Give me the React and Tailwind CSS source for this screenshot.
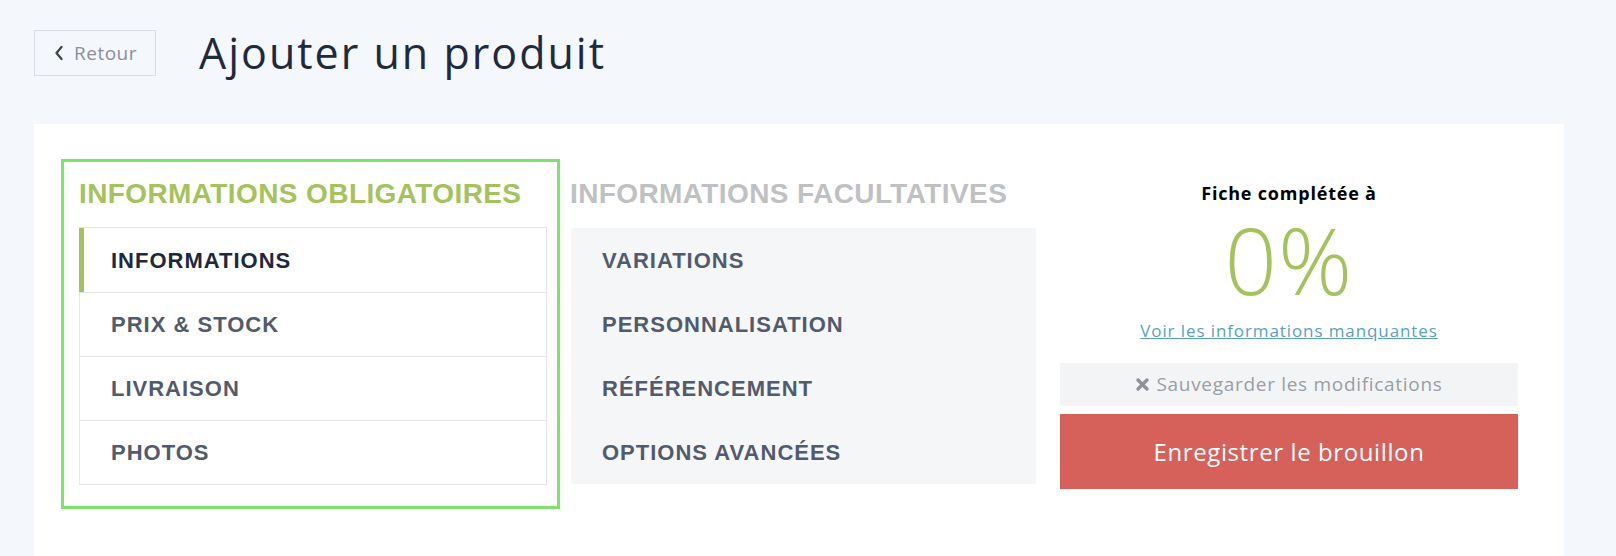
import React from "react";

const sans = "font-['Open_Sans','Noto_Sans',sans-serif]";
const caps = "font-['Liberation_Sans',Arial,sans-serif]";

const required = ["INFORMATIONS", "PRIX & STOCK", "LIVRAISON", "PHOTOS"];
const optional = ["VARIATIONS", "PERSONNALISATION", "RÉFÉRENCEMENT", "OPTIONS AVANCÉES"];

export default function App() {
  return (
    <div className={`min-h-[556px] bg-[#f4f7fb] ${sans}`}>
      {/* header */}
      <div className="flex items-center gap-[43px] pl-[34px] pt-[30px] pb-[48px]">
        <button className="flex items-center gap-[9px] h-[46px] w-[122px] justify-center border border-[#d8dde3] text-[19px] text-[#8a9099] tracking-[0.5px]">
          <svg width="12" height="18" viewBox="0 0 12 18" fill="none">
            <path d="M8.5 3L3.5 9L8.5 15" stroke="#3f4753" strokeWidth="2.3" strokeLinecap="round" strokeLinejoin="round" />
          </svg>
          Retour
        </button>
        <h1 className="text-[43px] leading-[46px] text-[#1f2a3d] tracking-[2px]">Ajouter un produit</h1>
      </div>

      {/* card */}
      <div className="ml-[34px] w-[1530px] bg-white pt-[35px] pl-[27px] pb-[60px] flex items-start">
        <div className="w-[499px] border-[3px] border-[#7ee36b] pl-[15px] pr-[10px] pt-[16px] pb-[21px]">
          <h2 className={`${caps} font-bold text-[28px] leading-[32px] tracking-[0.4px] text-[#a5c25c]`}>INFORMATIONS OBLIGATOIRES</h2>
          <div className="mt-[17px] border border-[#e3e5e8]">
            {required.map((r, i) =>
              i === 0 ? (
                <div
                  key={r}
                  className={`h-[64px] flex items-center border-l-[5px] border-l-[#a5c25c] -ml-px pl-[27px] ${caps} font-bold text-[22px] tracking-[1px] text-[#1e293b]`}
                >
                  {r}
                </div>
              ) : (
                <div
                  key={r}
                  className={`h-[64px] flex items-center border-t border-[#e3e5e8] pl-[31px] ${caps} font-bold text-[22px] tracking-[1px] text-[#515b6b]`}
                >
                  {r}
                </div>
              )
            )}
          </div>
        </div>

        <div className="w-[466px] ml-[10px] pt-[19px]">
          <h2 className={`${caps} font-bold text-[28px] leading-[32px] tracking-[0.4px] text-[#bfc0c2]`}>INFORMATIONS FACULTATIVES</h2>
          <div className="mt-[18px] bg-[#f5f6f8] ml-[1px]">
            {optional.map((r) => (
              <div key={r} className={`h-[64px] flex items-center pl-[31px] ${caps} font-bold text-[22px] tracking-[1px] text-[#515b6b]`}>
                {r}
              </div>
            ))}
          </div>
        </div>

        <div className="w-[458px] ml-[24px] pt-[22px] flex flex-col items-center">
          <div className="text-[18px] font-bold text-black leading-[24px] tracking-[0.8px]">Fiche complétée à</div>
          <div className="text-[92px] leading-[92px] text-[#a5c25c] mt-[9px] tracking-[1px] font-light">0%</div>
          <a href="#" className="text-[17px] text-[#5b9fbd] underline leading-[22px] mt-[14px] tracking-[0.9px]">
            Voir les informations manquantes
          </a>
          <button className="mt-[21px] w-full h-[43px] bg-[#f3f4f6] flex items-center justify-center gap-[6px] text-[19px] text-[#9a9ea5] tracking-[0.7px]">
            <svg width="15" height="15" viewBox="0 0 15 15">
              <path d="M3 3L12 12M12 3L3 12" stroke="#8f9399" strokeWidth="3.4" strokeLinecap="round" />
            </svg>
            Sauvegarder les modifications
          </button>
          <button className="mt-[8px] w-full h-[75px] bg-[#d6605a] text-white text-[24px] tracking-[0.6px]">
            Enregistrer le brouillon
          </button>
        </div>
      </div>
    </div>
  );
}
